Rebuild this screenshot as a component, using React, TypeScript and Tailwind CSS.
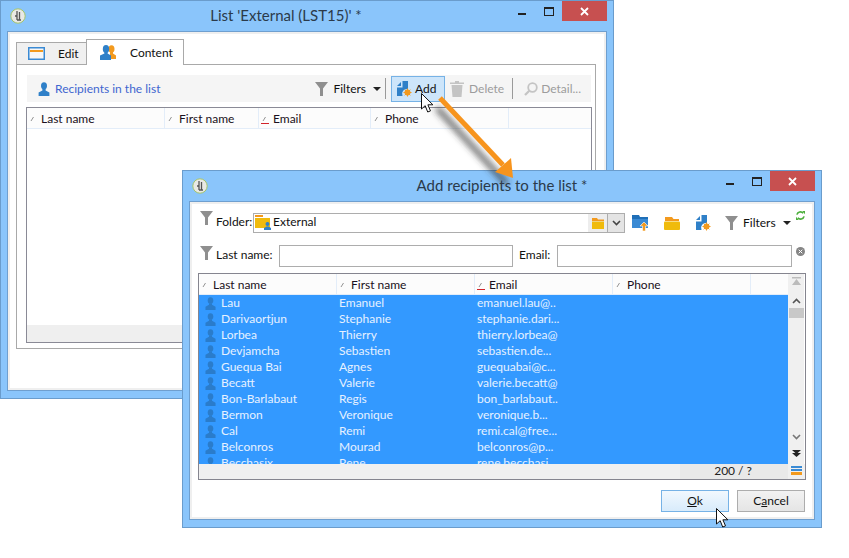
import type { ReactNode } from "react";

const rows = [
  ["Lau", "Emanuel", "emanuel.lau@.."],
  ["Darivaortjun", "Stephanie", "stephanie.dari..."],
  ["Lorbea", "Thierry", "thierry.lorbea@"],
  ["Devjamcha", "Sebastien", "sebastien.de..."],
  ["Guequa Bai", "Agnes", "guequabai@c..."],
  ["Becatt", "Valerie", "valerie.becatt@"],
  ["Bon-Barlabaut", "Regis", "bon_barlabaut.."],
  ["Bermon", "Veronique", "veronique.b..."],
  ["Cal", "Remi", "remi.cal@free..."],
  ["Belconros", "Mourad", "belconros@p..."],
  ["Becchasix", "Rene", "rene.becchasi.."],
];

function AppIcon() {
  return (
    <svg width="16" height="16" viewBox="0 0 16 16">
      <circle cx="8" cy="8" r="7.2" fill="#e9e9e4" stroke="#a6c56a" strokeWidth="1" />
      <path d="M7 3v9M9.5 4v8M5 8h2M7 12h4" stroke="#555" strokeWidth="1.3" fill="none" />
    </svg>
  );
}

function Person({ color = "#2f80c8", size = 14 }: { color?: string; size?: number }) {
  return (
    <svg width={size} height={size} viewBox="0 0 14 14" className="shrink-0">
      <ellipse cx="7" cy="3.8" rx="3" ry="3.6" fill={color} />
      <path d="M5.4 7h3.2v1.4L12.4 10.5V14H1.6v-3.5L5.4 8.4z" fill={color} />
    </svg>
  );
}

function People() {
  return (
    <svg width="17" height="15" viewBox="0 0 17 15" className="shrink-0">
      <ellipse cx="11.5" cy="4" rx="3" ry="3.8" fill="#f39a1e" />
      <path d="M10 7h3v1.6l3 2V14h-6z" fill="#f39a1e" />
      <ellipse cx="6" cy="4" rx="3.2" ry="3.9" fill="#2f80c8" />
      <path d="M4.4 7h3.2v1.6l3.4 2V15H0v-4.400l4.400-2z" fill="#2f80c8" />
    </svg>
  );
}

function Funnel({ className = "" }: { className?: string }) {
  return (
    <svg width="13" height="14" viewBox="0 0 13 14" className={`shrink-0 ${className}`}>
      <path d="M0 0h13L8 6.500V14H5V6.500z" fill="#8f8f8f" />
    </svg>
  );
}

function Caret() {
  return (
    <svg width="8" height="4" viewBox="0 0 8 4" className="shrink-0">
      <path d="M0 0h8L4 4z" fill="#222" />
    </svg>
  );
}

function Folder({ top = "#f39a1e", body = "#f0bb0c" }: { top?: string; body?: string }) {
  return (
    <svg width="16" height="13" viewBox="0 0 16 13" className="shrink-0">
      <path d="M1 0h7l1.500 2H15v2H1z" fill={top} />
      <rect x="0" y="4.500" width="16" height="8.500" rx="1" fill={body} />
    </svg>
  );
}

function UserFolder() {
  return (
    <svg width="16" height="15" viewBox="0 0 16 15" className="shrink-0">
      <rect x="0" y="0" width="8" height="2" fill="#f39a1e" />
      <path d="M0 3h15v10H0z" fill="#f0bb0c" />
      <circle cx="12.500" cy="9" r="2" fill="#2f80c8" />
      <path d="M9 15v-2l2.500-1.500h2L16 13v2z" fill="#2f80c8" />
    </svg>
  );
}

function NewDoc() {
  return (
    <svg width="16" height="16" viewBox="0 0 16 16" className="shrink-0">
      <path d="M1 5 5 1v4z" fill="#2f80c8" />
      <path d="M6.500 0H12v8a5 5 0 0 0-5.500 7H1V6.500h5.500z" fill="#2f80c8" />
      <circle cx="11.500" cy="11.500" r="3" fill="#f39a1e" />
      <path d="M11.500 7.500v8M7.500 11.500h8M8.700 8.700l5.600 5.600M14.300 8.700l-5.600 5.600" stroke="#f39a1e" strokeWidth="1" />
    </svg>
  );
}

function FolderUp() {
  return (
    <svg width="17" height="16" viewBox="0 0 17 16" className="shrink-0">
      <path d="M0 0h7l1 2h8v2H0z" fill="#1f6fb8" />
      <path d="M0 4h16v9H0z" fill="#3a8ad4" />
      <path d="M12 7l4 4h-2.500v5h-3v-5H8z" fill="#f39a1e" stroke="#fff" strokeWidth="0.600" />
    </svg>
  );
}

function SortMark({ active = false }: { active?: boolean }) {
  return (
    <svg width="9" height="9" viewBox="0 0 9 9" className="shrink-0">
      <path d="M2 6 4.500 2" stroke="#777" strokeWidth="0.800" fill="none" />
      {active && <path d="M0 8.500h8" stroke="#d2232a" strokeWidth="1" />}
    </svg>
  );
}

function Controls() {
  return (
    <div className="flex items-start justify-end">
      <span className="mt-[12px] h-[2px] w-[8px] bg-[#222]" />
      <span className="ml-[18px] mt-[6px] h-[9px] w-[10px] border border-t-2 border-[#222]" />
      <span className="ml-[8px] flex h-[20px] w-[45px] items-center justify-center bg-[#c75050]">
        <svg width="9" height="9" viewBox="0 0 9 9">
          <path d="M1 1l7 7M8 1 1 8" stroke="#fff" strokeWidth="1.800" />
        </svg>
      </span>
    </div>
  );
}

function TitleBar({ title, offset = "" }: { title: string; offset?: string }) {
  return (
    <div className="grid h-[30px] shrink-0 grid-cols-[1fr_auto_1fr]">
      <div className="pl-[9px] pt-[7px]">
        <AppIcon />
      </div>
      <div className={`pt-[7px] text-[15px] text-[#2b3a4a] ${offset}`}>{title}</div>
      <div className="pr-[6px]">
        <Controls />
      </div>
    </div>
  );
}

function Frame({ children }: { children: ReactNode }) {
  return (
    <div className="mx-[6px] mb-[7px] flex min-h-0 flex-1 flex-col border border-[#6f9fcf] bg-white">
      <div className="flex min-h-0 flex-1 flex-col border-2 border-[#efefef] bg-white">{children}</div>
    </div>
  );
}

function HeaderCell({ label, width, active }: { label: string; width: string; active?: boolean }) {
  return (
    <div className={`flex h-full shrink-0 items-center gap-[3px] border-r border-[#e3edf9] pl-[2px] pt-[2px] ${width}`}>
      <SortMark active={active} />
      <span className="text-[#1a1020]">{label}</span>
    </div>
  );
}

function ListWindow() {
  return (
    <div className="absolute left-0 top-0 flex h-[399px] w-[614px] flex-col border border-[#6a9ccc] bg-[#8ac5fb]">
      <TitleBar title="List 'External (LST15)' *" offset="-translate-x-[21px]" />
      <Frame>
        <div className="flex h-full flex-col px-[6px] pt-[5px]">
          <div className="relative z-10 -mb-px flex h-[26px] items-end">
            <div className="flex h-[23px] w-[70px] items-center gap-[13px] border border-r-0 border-[#a9a9a9] bg-[#f0f0f0] pl-[11px]">
              <svg width="17" height="13" viewBox="0 0 17 13" className="shrink-0">
                <rect x="0.750" y="0.750" width="15.500" height="11.500" fill="#f7f7f7" stroke="#3a8ad4" strokeWidth="1.500" />
                <rect x="2" y="3" width="13" height="2" fill="#f39a1e" />
              </svg>
              <span>Edit</span>
            </div>
            <div className="flex h-[26px] w-[98px] items-center gap-[13px] border border-b-0 border-[#a9a9a9] bg-white pl-[13px]">
              <People />
              <span>Content</span>
            </div>
          </div>
          <div className="flex h-[285px] w-[580px] flex-col border border-[#a9a9a9] pl-[9px] pr-[3px] pt-[10px]">
            <div className="mx-px flex h-[27px] items-center bg-[#f5f5f5] pr-[10px]">
              <div className="ml-[10px]">
                <Person />
              </div>
              <span className="ml-[4px] text-[#3f66d0]">Recipients in the list</span>
              <div className="ml-auto flex items-center">
                <Funnel />
                <span className="ml-[5px]">Filters</span>
                <span className="ml-[7px]">
                  <Caret />
                </span>
                <span className="ml-[4px] h-[21px] w-px bg-[#9a9a9a]" />
                <div className="ml-[5px] flex h-[26px] w-[54px] items-center gap-[3px] border border-[#76b2e6] bg-[#cde5fa] pl-[4px]">
                  <NewDoc />
                  <span>Add</span>
                </div>
                <svg width="14" height="16" viewBox="0 0 14 16" className="ml-[5px] shrink-0">
                  <path d="M5 0h4v1.500h5V3H0V1.500h5zM1.500 4h11l-1 12h-9z" fill="#c4c4c4" />
                </svg>
                <span className="ml-[5px] text-[#9c9c9c]">Delete</span>
                <span className="ml-[8px] h-[21px] w-px bg-[#9a9a9a]" />
                <svg width="14" height="14" viewBox="0 0 14 14" className="ml-[11px] shrink-0">
                  <circle cx="8.500" cy="5.500" r="4.300" fill="none" stroke="#c4c4c4" strokeWidth="1.800" />
                  <path d="M5.300 8.700 1 13" stroke="#c4c4c4" strokeWidth="2.200" />
                </svg>
                <span className="ml-[3px] text-[#9c9c9c]">Detail...</span>
              </div>
            </div>
            <div className="mt-[5px] flex h-[236px] flex-col border border-[#8a8a96]">
              <div className="flex h-[21px] shrink-0 items-center border-b border-[#e3edf9] bg-[#fcfcfc]">
                <HeaderCell label="Last name" width="w-[138px]" />
                <HeaderCell label="First name" width="w-[94px]" />
                <HeaderCell label="Email" width="w-[112px]" active />
                <HeaderCell label="Phone" width="w-[138px]" />
              </div>
              <div className="flex-1 bg-white" />
              <div className="h-[17px] shrink-0 bg-[#efefef]" />
            </div>
          </div>
        </div>
      </Frame>
    </div>
  );
}

function RecipientsTable() {
  return (
    <div className="mx-[6px] mt-[6px] flex h-[207px] flex-col border border-[#85858f]">
      <div className="flex min-h-0 flex-1">
        <div className="flex min-h-0 w-[589px] flex-col overflow-hidden">
          <div className="flex h-[21px] shrink-0 items-center border-b border-[#e3edf9] bg-[#fcfcfc]">
            <HeaderCell label="Last name" width="w-[138px]" />
            <HeaderCell label="First name" width="w-[138px]" />
            <HeaderCell label="Email" width="w-[138px]" active />
            <HeaderCell label="Phone" width="w-[138px]" />
          </div>
          <div className="min-h-0 flex-1 overflow-hidden bg-[#3399ff] text-[#e6f1ff]">
            {rows.map((r) => (
              <div key={r[0]} className="flex h-[16px] items-center">
                <div className="flex w-[140px] shrink-0 items-center">
                  <div className="ml-[5px] w-[17px]">
                    <Person color="#2a7ccb" size={13} />
                  </div>
                  <span>{r[0]}</span>
                </div>
                <span className="w-[138px] shrink-0">{r[1]}</span>
                <span>{r[2]}</span>
              </div>
            ))}
          </div>
        </div>
        <div className="flex w-[16px] shrink-0 flex-col items-center bg-[#f0f0f0]">
          <svg width="9" height="8" viewBox="0 0 9 8" className="mt-[3px]">
            <path d="M0 0h9v1.500H0zM4.500 2 9 8H0z" fill="#bbb" />
          </svg>
          <svg width="9" height="6" viewBox="0 0 9 6" className="mt-[13px]">
            <path d="M1 5l3.500-3.500L8 5" stroke="#555" strokeWidth="1.600" fill="none" />
          </svg>
          <div className="mt-[4px] h-[10px] w-[15px] bg-[#c8c8c8]" />
          <svg width="9" height="6" viewBox="0 0 9 6" className="mt-[116px]">
            <path d="M1 1l3.500 3.500L8 1" stroke="#777" strokeWidth="1.600" fill="none" />
          </svg>
          <svg width="9" height="7" viewBox="0 0 9 7" className="mt-[10px]">
            <path d="M0 0h9L4.500 4zM0 3h9L4.500 7z" fill="#222" />
          </svg>
        </div>
      </div>
      <div className="flex h-[15px] shrink-0 bg-[#f0f0f0]">
        <div className="ml-[481px] flex w-[108px] items-center justify-end bg-[#e9e9e9] pb-px pr-[36px] text-[#222]">200 / ?</div>
        <div className="ml-[3px] flex w-[11px] flex-col gap-px pt-[2px]">
          <span className="h-[2px] bg-[#3a8ad4]" />
          <span className="h-[2px] bg-[#3a8ad4]" />
          <span className="h-[3px] bg-[#f39a1e]" />
        </div>
      </div>
    </div>
  );
}

function AddWindow() {
  return (
    <div className="absolute left-[182px] top-[170px] flex h-[358px] w-[640px] flex-col border border-[#6a9ccc] bg-[#8ac5fb]">
      <TitleBar title="Add recipients to the list *" />
      <Frame>
        <div className="mt-[9px] flex h-[22px] items-start pl-[8px]">
          <Funnel className="-mt-[2px]" />
          <span className="ml-[3px] mt-[3px] w-[37px]">Folder:</span>
          <div className="flex h-[20px] w-[372px] items-center border border-[#adadad]">
            <div className="flex flex-1 items-center gap-[2px] pb-[2px] pl-[1px]">
              <UserFolder />
              <span>External</span>
            </div>
            <div className="flex h-full w-[19px] items-center justify-center bg-[#ededed]">
              <svg width="12" height="11" viewBox="0 0 12 11">
                <path d="M0 0h5l1 1.500h6V3H0z" fill="#f39a1e" />
                <rect y="3.500" width="12" height="7.500" fill="#f0bb0c" />
              </svg>
            </div>
            <div className="flex h-full w-[17px] items-center justify-center border-l border-[#adadad] bg-[#e4e4e4]">
              <svg width="9" height="6" viewBox="0 0 9 6">
                <path d="M1 1l3.500 3.500L8 1" stroke="#444" strokeWidth="1.600" fill="none" />
              </svg>
            </div>
          </div>
          <div className="ml-[7px] mt-[2px] flex items-center">
            <FolderUp />
            <div className="ml-[15px]">
              <Folder />
            </div>
            <div className="ml-[15px]">
              <NewDoc />
            </div>
            <div className="ml-[14px]">
              <Funnel />
            </div>
            <span className="ml-[5px]">Filters</span>
            <span className="ml-[7px]">
              <Caret />
            </span>
          </div>
          <svg width="9" height="9" viewBox="0 0 10 10" className="-mt-[2px] ml-[5px]">
            <path d="M1 4a4 4 0 0 1 7-1.500M9 6a4 4 0 0 1-7 1.500" stroke="#4caf3c" strokeWidth="1.800" fill="none" />
            <path d="M7 0h3v3.500zM3 10H0V6.500z" fill="#4caf3c" />
          </svg>
        </div>
        <div className="mt-[10px] flex h-[22px] items-start pl-[8px]">
          <Funnel className="mt-px" />
          <span className="ml-[3px] mt-[4px] w-[63px]">Last name:</span>
          <div className="h-[22px] w-[234px] border border-[#adadad]" />
          <span className="ml-[6px] mt-[4px] w-[38px]">Email:</span>
          <div className="h-[22px] w-[235px] border border-[#adadad]" />
          <svg width="9" height="9" viewBox="0 0 9 9" className="ml-[4px] mt-[2px]">
            <circle cx="4.500" cy="4.500" r="4.500" fill="#858585" />
            <path d="M2.700 2.700l3.600 3.600M6.300 2.700 2.700 6.300" stroke="#fff" strokeWidth="1" />
          </svg>
        </div>
        <RecipientsTable />
        <div className="mr-[7px] mt-[10px] flex justify-end gap-[8px]">
          <div className="flex h-[22px] w-[68px] items-center justify-center border border-[#76b2e6] bg-gradient-to-b from-[#f1f8fe] to-[#d8ebfb]">
            <span><span className="underline">O</span>k</span>
          </div>
          <div className="flex h-[22px] w-[68px] items-center justify-center border border-[#adadad] bg-gradient-to-b from-[#f2f2f2] to-[#e5e5e5]">
            <span>C<span className="underline">a</span>ncel</span>
          </div>
        </div>
      </Frame>
    </div>
  );
}

function Pointer({ className }: { className: string }) {
  return (
    <svg width="14" height="20" viewBox="0 0 14 20" className={className}>
      <path d="M.5.500v15.500l3.700-3.300 2.500 6.300 2.800-1.100-2.600-6.100h5z" fill="#fff" stroke="#111" strokeWidth="1" />
    </svg>
  );
}

function Arrow() {
  return (
    <svg width="849" height="558" viewBox="0 0 849 558" className="pointer-events-none absolute left-0 top-0">
      <defs>
        <filter id="soft" x="-20%" y="-20%" width="140%" height="140%">
          <feGaussianBlur stdDeviation="3" />
        </filter>
      </defs>
      <path d="M437 108 507 184" stroke="#333" strokeOpacity="0.700" strokeWidth="6" filter="url(#soft)" />
      <path d="M440 98 503 165" stroke="#f7941d" strokeWidth="5" />
      <path d="M495 172 511 158 513 178z" fill="#f7941d" />
    </svg>
  );
}

export default function App() {
  return (
    <div className="relative h-[558px] w-[849px] overflow-hidden bg-white text-[12px] leading-none text-[#111] [font-family:Lato,'Liberation_Sans',sans-serif]">
      <ListWindow />
      <AddWindow />
      <Arrow />
      <Pointer className="absolute left-[421px] top-[93px]" />
      <Pointer className="absolute left-[716px] top-[508px]" />
    </div>
  );
}
